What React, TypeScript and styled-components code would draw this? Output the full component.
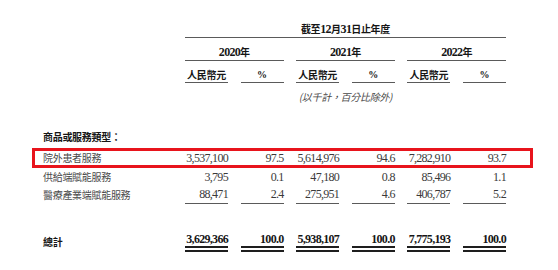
import React from "react";
import styled, { createGlobalStyle } from "styled-components";

const GlobalStyle = createGlobalStyle`
  html, body { margin: 0; padding: 0; background: #fff; }
  body { font-family: "Liberation Serif", "Noto Sans CJK TC", serif; color: #333; }
`;

const Page = styled.div`
  width: 558px;
  height: 270px;
  box-sizing: border-box;
  overflow: hidden;
  padding: 21px 0 0 32px;
`;

const Row = styled.div<{ $h: number; $top?: number; $hl?: boolean }>`
  display: grid;
  grid-template-columns: 140.4px repeat(6, 43px);
  column-gap: 12.6px;
  width: 501px;
  box-sizing: border-box;
  padding-right: 27px;
  height: ${(p) => p.$h}px;
  margin-top: ${(p) => p.$top ?? 0}px;
  box-shadow: ${(p) => (p.$hl ? "inset 0 0 0 3px #e8141c" : "none")};
`;

type Rule = "none" | "single" | "double";

const Cell = styled.div<{
  $col: string;
  $align?: "left" | "right" | "center";
  $rule?: Rule;
  $bold?: boolean;
  $italic?: boolean;
  $pt?: number;
  $pl?: number;
}>`
  grid-column: ${(p) => p.$col};
  display: flex;
  align-items: center;
  justify-content: ${(p) =>
    p.$align === "left" ? "flex-start" : p.$align === "center" ? "center" : "flex-end"};
  box-sizing: border-box;
  height: 100%;
  padding-top: ${(p) => p.$pt ?? 0}px;
  padding-left: ${(p) => p.$pl ?? 0}px;
  line-height: 14px;
  font-size: 12px;
  letter-spacing: -0.7px;
  white-space: nowrap;
  font-weight: ${(p) => (p.$bold ? 700 : 400)};
  font-style: ${(p) => (p.$italic ? "italic" : "normal")};
  color: ${(p) => (p.$bold ? "#161616" : "#3a3a3a")};
  border-bottom: ${(p) =>
    p.$rule === "single"
      ? "1px solid #5a5a5a"
      : p.$rule === "double"
      ? "6px double #1e1e1e"
      : "none"};
`;

const Han = styled.span<{ $soft?: boolean }>`
  font-family: "Noto Sans CJK TC", sans-serif;
  font-size: 10px;
  letter-spacing: -0.3px;
  color: ${(p) => (p.$soft ? "#4a4a4a" : "inherit")};
`;

const Pct = styled.span`
  font-size: 10px;
  letter-spacing: 0;
`;

const dataRows = [
  ["院外患者服務", "3,537,100", "97.5", "5,614,976", "94.6", "7,282,910", "93.7"],
  ["供給端賦能服務", "3,795", "0.1", "47,180", "0.8", "85,496", "1.1"],
  ["醫療產業端賦能服務", "88,471", "2.4", "275,951", "4.6", "406,787", "5.2"],
];

const total = ["總計", "3,629,366", "100.0", "5,938,107", "100.0", "7,775,193", "100.0"];

const years = ["2020", "2021", "2022"];

export default function App() {
  return (
    <>
      <GlobalStyle />
      <Page>
        <Row $h={17}>
          <Cell $col="2 / 8" $align="center" $rule="single" $bold>
            <Han>截至</Han>12<Han>月</Han>31<Han>日止年度</Han>
          </Cell>
        </Row>
        <Row $h={23}>
          {years.map((y, i) => (
            <Cell key={y} $col={`${2 + i * 2} / span 2`} $align="center" $rule="single" $bold $pt={6}>
              {y}
              <Han>年</Han>
            </Cell>
          ))}
        </Row>
        <Row $h={22}>
          {years.map((y, i) => (
            <React.Fragment key={y}>
              <Cell $col={`${2 + i * 2}`} $align="center" $rule="single" $bold $pt={6}>
                <Han>人民幣元</Han>
              </Cell>
              <Cell $col={`${3 + i * 2}`} $align="center" $rule="single" $bold $pt={6}>
                <Pct>%</Pct>
              </Cell>
            </React.Fragment>
          ))}
        </Row>
        <Row $h={21}>
          <Cell $col="4 / span 2" $align="center" $italic $pt={6}>
            <Han $soft>(以千計，百分比除外)</Han>
          </Cell>
        </Row>
        <Row $h={14} $top={26}>
          <Cell $col="1 / span 3" $align="left" $bold $pl={11}>
            <Han>商品或服務類型：</Han>
          </Cell>
        </Row>
        {dataRows.map((r, ri) => (
          <Row
            key={r[0]}
            $h={ri === 0 ? 20 : ri === 1 ? 17 : 19}
            $top={ri === 0 ? 4 : 0}
            $hl={ri === 0}
          >
            <Cell $col="1" $align="left" $pl={11}>
              <Han $soft>{r[0]}</Han>
            </Cell>
            {r.slice(1).map((v, ci) => (
              <Cell key={ci} $col={`${ci + 2}`} $rule={ri === 2 ? "single" : "none"}>
                {v}
              </Cell>
            ))}
          </Row>
        ))}
        <Row $h={21} $top={27}>
          <Cell $col="1" $align="left" $bold $pl={11}>
            <Han>{total[0]}</Han>
          </Cell>
          {total.slice(1).map((v, ci) => (
            <Cell key={ci} $col={`${ci + 2}`} $rule="double" $bold>
              {v}
            </Cell>
          ))}
        </Row>
      </Page>
    </>
  );
}
